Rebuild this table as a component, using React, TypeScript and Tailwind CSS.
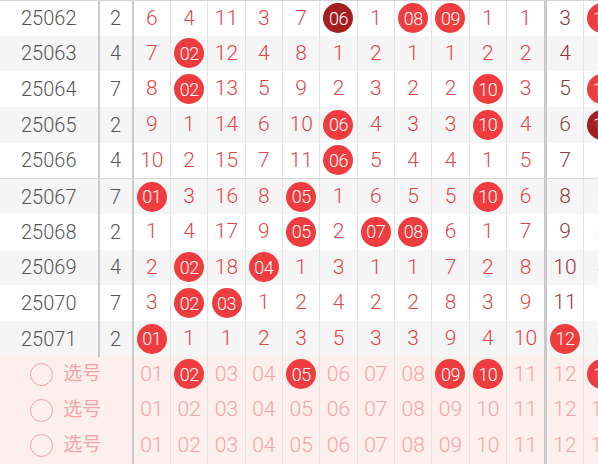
import React from "react";

// b = red ball, d = dark ball, anything else = plain number
const ROWS: { issue: string; n: string; cells: string[]; c12: string; c13: string }[] = [
  { issue: "25062", n: "2", cells: ["6", "4", "11", "3", "7", "d06", "1", "b08", "b09", "1", "1"], c12: "3", c13: "b13" },
  { issue: "25063", n: "4", cells: ["7", "b02", "12", "4", "8", "1", "2", "1", "1", "2", "2"], c12: "4", c13: "1" },
  { issue: "25064", n: "7", cells: ["8", "b02", "13", "5", "9", "2", "3", "2", "2", "b10", "3"], c12: "5", c13: "b13" },
  { issue: "25065", n: "2", cells: ["9", "1", "14", "6", "10", "b06", "4", "3", "3", "b10", "4"], c12: "6", c13: "d13" },
  { issue: "25066", n: "4", cells: ["10", "2", "15", "7", "11", "b06", "5", "4", "4", "1", "5"], c12: "7", c13: "1" },
  { issue: "25067", n: "7", cells: ["b01", "3", "16", "8", "b05", "1", "6", "5", "5", "b10", "6"], c12: "8", c13: "2" },
  { issue: "25068", n: "2", cells: ["1", "4", "17", "9", "b05", "2", "b07", "b08", "6", "1", "7"], c12: "9", c13: "3" },
  { issue: "25069", n: "4", cells: ["2", "b02", "18", "b04", "1", "3", "1", "1", "7", "2", "8"], c12: "10", c13: "4" },
  { issue: "25070", n: "7", cells: ["3", "b02", "b03", "1", "2", "4", "2", "2", "8", "3", "9"], c12: "11", c13: "5" },
  { issue: "25071", n: "2", cells: ["b01", "1", "1", "2", "3", "5", "3", "3", "9", "4", "10"], c12: "b12", c13: "6" },
];

const PICKS: string[][] = [
  ["01", "b02", "03", "04", "b05", "06", "07", "08", "b09", "b10", "11", "12", "b13"],
  ["01", "02", "03", "04", "05", "06", "07", "08", "09", "10", "11", "12", "13"],
  ["01", "02", "03", "04", "05", "06", "07", "08", "09", "10", "11", "12", "13"],
];

const COL_W = [
  "w-[37.33px] border-r border-[#e3e3e3]",
  "w-[37.33px] border-r border-[#e3e3e3]",
  "w-[37.33px] border-r border-[#e3e3e3]",
  "w-[37.33px] border-r border-[#e3e3e3]",
  "w-[37.33px] border-r border-[#e3e3e3]",
  "w-[37.33px] border-r border-[#e3e3e3]",
  "w-[37.33px] border-r border-[#e3e3e3]",
  "w-[37.33px] border-r border-[#e3e3e3]",
  "w-[37.33px] border-r border-[#e3e3e3]",
  "w-[37.33px] border-r border-[#e3e3e3]",
  "w-[40px] border-r-[3px] border-[#cacaca]",
  "w-[37px] border-r border-[#e3e3e3]",
  "w-[37px]",
];

function Num({ v, tone }: { v: string; tone: "red" | "maroon" | "pink" }) {
  if (v.startsWith("b") || v.startsWith("d")) {
    return (
      <span
        className={`w-[30px] h-[30px] rounded-full flex items-center justify-center text-white text-[18px] font-light tracking-[-0.5px] ${
          v.startsWith("d") ? "bg-[#a51f20]" : "bg-[#ef3c3e]"
        }`}
      >
        {v.slice(1)}
      </span>
    );
  }
  const color = tone === "red" ? "text-[#e0474b]" : tone === "maroon" ? "text-[#8f3b3b]" : "text-[#f3a5a5]";
  return <span className={`text-[21px] font-light ${color}`}>{v}</span>;
}

export default function App() {
  return (
    <div className="w-[598px] h-[464px] overflow-hidden bg-white font-[Roboto,'Noto_Sans_CJK_SC',sans-serif]">
      {ROWS.map((r, i) => (
        <div
          key={r.issue}
          className={`flex h-[35.67px] ${i % 2 ? "bg-[#f5f5f5]" : "bg-white"} ${
            i % 5 === 0 ? "border-t-[1.5px] border-[#d6d6d6]" : ""
          }`}
        >
          <div className="w-[99.5px] shrink-0 border-r-2 border-[#cacaca] flex items-center justify-center text-[20px] font-light text-[#555]">
            {r.issue}
          </div>
          <div className="w-[34.2px] shrink-0 border-r-2 border-[#cacaca] flex items-center justify-center text-[20px] font-light text-[#555]">
            {r.n}
          </div>
          {[...r.cells, r.c12, r.c13].map((v, j) => (
            <div key={j} className={`${COL_W[j]} shrink-0 flex items-center justify-center`}>
              <Num v={v} tone={j === 11 && !v.startsWith("b") ? "maroon" : "red"} />
            </div>
          ))}
        </div>
      ))}

      {PICKS.map((p, i) => (
        <div key={i} className="flex h-[35.67px] bg-[#fdefeb]">
          <div className="w-[133.7px] shrink-0 border-r-2 border-[#cacaca] flex items-center justify-center gap-[10px]">
            <span className="w-[23px] h-[23px] rounded-full border-[1.5px] border-[#f3a5a5]" />
            <span className="text-[19px] text-[#f3a5a5]">选号</span>
          </div>
          {p.map((v, j) => (
            <div key={j} className={`${COL_W[j]} shrink-0 flex items-center justify-center`}>
              <Num v={v} tone="pink" />
            </div>
          ))}
        </div>
      ))}
    </div>
  );
}
